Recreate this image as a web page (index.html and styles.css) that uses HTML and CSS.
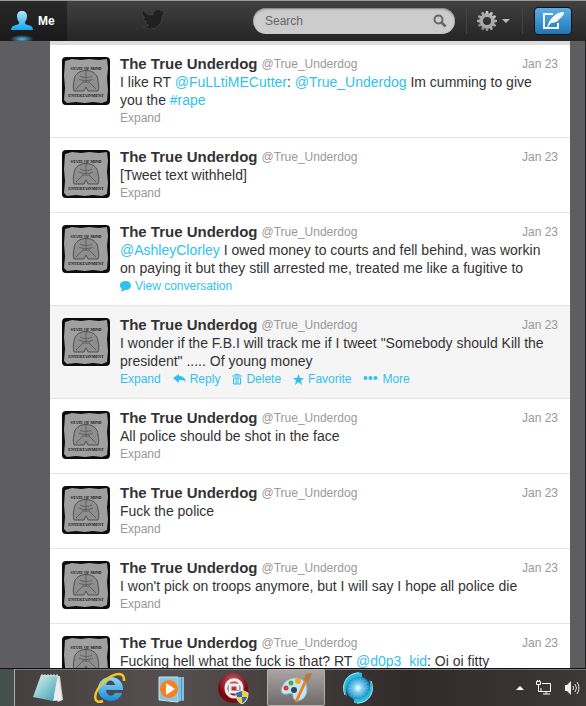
FILE: index.html
```html
<!DOCTYPE html>
<html lang="en">
<head>
<meta charset="utf-8">
<title>Timeline</title>
<link rel="stylesheet" href="styles.css">
</head>
<body>
<svg class="defs" aria-hidden="true">
  <defs>
    <linearGradient id="blue" x2="0" y2="1"><stop stop-color="#b4e4fb"/><stop offset="1" stop-color="#12a7ee"/></linearGradient>
    <linearGradient id="grey" x2="0" y2="1"><stop stop-color="#ccc"/><stop offset="1" stop-color="#888"/></linearGradient>
    <linearGradient id="page" x2="1" y2="1"><stop stop-color="#e2f5f6"/><stop offset="1" stop-color="#3b9db0"/></linearGradient>
    <linearGradient id="ie" x2="0" y2="1"><stop stop-color="#8fdcff"/><stop offset="1" stop-color="#188bd8"/></linearGradient>
    <radialGradient id="red" cy=".3"><stop stop-color="#c96870"/><stop offset="1" stop-color="#780911"/></radialGradient>
    <radialGradient id="glow"><stop stop-color="#fff"/><stop offset=".4" stop-color="#73cdf0"/><stop offset="1" stop-color="#0c83bd"/></radialGradient>
    <symbol id="avatar" viewBox="0 0 48 48">
      <rect width="48" height="48" rx="4" fill="#0c0c0c"/>
      <path d="M3 4l7-2 9 1 8-1 10 1 8-1 1 9-1 10 1 12-1 11-5 2-9-1-8 1-9-1-9 1-3-3 1-12-1-12z" fill="#a0a0a0"/>
      <path d="M12 34c-1-4-1-6 0-10 0-14 24-14 24 0 1 4 1 6 0 10H26l-2-4-2 4z" fill="#8e8e8e" stroke="#505050"/>
      <path d="M18 19c3 2 9 2 12 0M17 22c3 2 11 2 14 0M24 14v12M14 32l7-7M34 32l-7-7M20 25h8" stroke="#606060" fill="none"/>
      <text x="24" y="13" text-anchor="middle" class="avatar-text">STATE OF MIND</text>
      <text x="24" y="40" text-anchor="middle" class="avatar-text">ENTERTAINMENT</text>
    </symbol>
  </defs>
</svg>
<header class="topbar">
  <a class="me" href="#"><svg width="22" height="20" viewBox="0 0 22 20"><path d="M6 5c0-7 10-7 10 0 0 3-1 5-2 6v2l6 2c1 1 2 2 2 4H0c0-2 1-3 2-4l6-2v-2C7 10 6 8 6 5z" fill="url(#blue)"/></svg>Me</a>
  <a class="brand" href="#" aria-label="Home"><svg width="24" height="20" viewBox="0 0 24 20"><path d="M1 1c3 4 6 5 10 5 0-5 5-7 8-4l4-1-2 3 2 0-3 3c0 8-5 13-12 13-3 0-5-1-7-2 3 0 5-1 6-2-2 0-4-1-4-3h2c-3-1-4-3-4-5l2 1C1 7-1 4 1 1z" fill="#202020" stroke="#505050" stroke-width=".5"/></svg></a>
  <form class="search"><input type="search" aria-label="Search" placeholder="Search"><button type="button" aria-label="Submit search"><svg width="14" height="14" viewBox="0 0 14 14"><circle cx="5.5" cy="5.5" r="4" fill="none" stroke="#666" stroke-width="2"/><path d="M8.500 8.500l4 4" stroke="#666" stroke-width="2.500"/></svg></button></form>
  <button class="settings" type="button" aria-label="Settings"><svg width="20" height="20" viewBox="-10 -10 20 20"><g fill="url(#grey)"><path id="tooth" d="M-1-10h2l1 4h-4zM-1 10h2l1-4h-4zM-10-1v2l4 1v-4zM10-1v2l-4 1v-4z"/><use href="#tooth" transform="rotate(30)"/><use href="#tooth" transform="rotate(60)"/></g><circle r="5.500" fill="none" stroke="#aaa" stroke-width="3"/></svg><svg width="8" height="4" viewBox="0 0 8 4"><path d="M0 0h8L4 4z" fill="#bbb"/></svg></button>
  <button class="compose" type="button" aria-label="Compose"><svg width="24" height="20" viewBox="0 0 24 20"><path d="M12 3H3v14h14v-5" fill="none" stroke="#f5f8fb" stroke-width="2"/><path d="M6 16C9 7 15 1 23 1c0 3-1 4-3 5h1l-4 3h1c-2 2-5 3-8 3l-3 4z" fill="#f5f8fb"/></svg></button>
</header>
<main class="page">
  <div class="feed">
    <article class="tweet"><svg class="avatar"><use href="#avatar"/></svg><div class="body"><header><b>The True Underdog</b> <span>@True_Underdog</span><time>Jan 23</time></header><p>I like RT <a href="#">@FuLLtiMECutter</a>: <a href="#">@True_Underdog</a> Im cumming to give you the <a href="#">#rape</a></p><footer><a href="#">Expand</a></footer></div></article>
    <article class="tweet"><svg class="avatar"><use href="#avatar"/></svg><div class="body"><header><b>The True Underdog</b> <span>@True_Underdog</span><time>Jan 23</time></header><p>[Tweet text withheld]</p><footer><a href="#">Expand</a></footer></div></article>
    <article class="tweet"><svg class="avatar"><use href="#avatar"/></svg><div class="body"><header><b>The True Underdog</b> <span>@True_Underdog</span><time>Jan 23</time></header><p><a href="#">@AshleyClorley</a> I owed money to courts and fell behind, was workin on paying it but they still arrested me, treated me like a fugitive to</p><footer class="active"><a href="#"><svg width="11" height="11" viewBox="0 0 11 11"><path d="M5.500 0C9 0 11 2 11 4.500S9 9 5 9L1 11l1-3C-2 5 0 0 5.500 0z"/></svg>View conversation</a></footer></div></article>
    <article class="tweet hovered"><svg class="avatar"><use href="#avatar"/></svg><div class="body"><header><b>The True Underdog</b> <span>@True_Underdog</span><time>Jan 23</time></header><p>I wonder if the F.B.I will track me if I tweet "Somebody should Kill the president" ..... Of young money</p><footer class="active"><a href="#">Expand</a><a href="#"><svg width="13" height="11" viewBox="0 0 13 11"><path d="M0 4l6-4v2c4 0 6 2 7 6-2-2-4-2-7-2v3z"/></svg>Reply</a><a href="#"><svg width="10" height="11" viewBox="0 0 10 11"><path d="M3 1.500V.5h4v1M0 2h10M1.500 4v6h7V4zM4 4v6M6 4v6" fill="none" stroke="#2fc2ef"/></svg>Delete</a><a href="#"><svg width="11" height="11" viewBox="0 0 11 11"><path d="M5.500 0L7 4h4L8 6.500 9 11 5.500 8 2 11l1-4.500L0 4h4z"/></svg>Favorite</a><a href="#"><svg width="15" height="11" viewBox="0 0 15 11"><circle cx="2.500" cy="4" r="2"/><circle cx="7.500" cy="4" r="2"/><circle cx="12.500" cy="4" r="2"/></svg>More</a></footer></div></article>
    <article class="tweet"><svg class="avatar"><use href="#avatar"/></svg><div class="body"><header><b>The True Underdog</b> <span>@True_Underdog</span><time>Jan 23</time></header><p>All police should be shot in the face</p><footer><a href="#">Expand</a></footer></div></article>
    <article class="tweet"><svg class="avatar"><use href="#avatar"/></svg><div class="body"><header><b>The True Underdog</b> <span>@True_Underdog</span><time>Jan 23</time></header><p>Fuck the police</p><footer><a href="#">Expand</a></footer></div></article>
    <article class="tweet"><svg class="avatar"><use href="#avatar"/></svg><div class="body"><header><b>The True Underdog</b> <span>@True_Underdog</span><time>Jan 23</time></header><p>I won't pick on troops anymore, but I will say I hope all police die</p><footer><a href="#">Expand</a></footer></div></article>
    <article class="tweet"><svg class="avatar"><use href="#avatar"/></svg><div class="body"><header><b>The True Underdog</b> <span>@True_Underdog</span><time>Jan 23</time></header><p>Fucking hell what the fuck is that? RT <a href="#">@d0p3_kid</a>: Oi oi fitty</p></div></article>
  </div>
</main>
<nav class="taskbar" aria-label="Taskbar">
  <span class="edge"></span>
  <button type="button" aria-label="Notepad"><svg width="32" height="32" viewBox="0 0 32 32"><path d="M9 3l19 1 3 24-5 2z" fill="#d8d2b8"/><path d="M9 3h17l-5 26L1 25z" fill="url(#page)"/><path d="M10 2v3m3-3v3m3-3v3m3-3v3m3-3v3m3-3v3" stroke="#ddd"/><path d="M26 3l4 25-9 1z" fill="#e9eeee"/></svg></button>
  <button type="button" aria-label="Internet Explorer"><svg width="32" height="32" viewBox="0 0 32 32"><path d="M28 21C25 33 4 31 4 17 4 1 30 1 29 18H12c1 7 7 7 9 3zM12 13h9c-1-6-8-6-9 0z" fill="url(#ie)" fill-rule="evenodd"/><path d="M30 9C31-4 15 3 7 13-1 22-1 33 9 29" fill="none" stroke="#f5c524" stroke-width="2.500"/></svg></button>
  <button type="button" aria-label="Media Player"><svg width="32" height="32" viewBox="0 0 32 32"><path d="M9 5h19v23l-7 2z" fill="#4d9cc4"/><path d="M24 5v24m3-24v24" stroke="#b9e2f2"/><path d="M3 5h19v25L3 28z" fill="#8cc4e0" stroke="#c2e4f2"/><circle cx="13" cy="17" r="9" fill="#f5821f"/><path d="M10 11l9 6-9 6z" fill="#fff"/></svg></button>
  <button type="button" aria-label="Security"><svg width="32" height="32" viewBox="0 0 32 32"><circle cx="15" cy="16" r="15" fill="url(#red)"/><path d="M20 24c-6 3-12-1-12-8 0-11 16-11 16 0 0 3-1 4-3 4H12v-7h8v5" fill="none" stroke="#eee" stroke-width="3"/><path d="M24 18l6 3c0 6-2 9-6 11-4-2-6-5-6-11z" fill="#f8cf2c" stroke="#ddd"/><path d="M24 19v6h-5l-1-4zM24 25h5c-1 3-2 5-5 6z" fill="#286fc5"/></svg></button>
  <button type="button" class="current" aria-label="Paint"><svg width="32" height="32" viewBox="0 0 32 32"><path d="M3 13C8 3 27 3 27 17c0 13-14 15-14 7 0-5-5-1-9-2-4-1-3-6-1-9z" fill="#c5e4f5" stroke="#83b7d8"/><circle cx="6" cy="16" r="2.500" fill="#d84030"/><circle cx="11" cy="11" r="2.500" fill="#4ca83a"/><circle cx="18" cy="9" r="3" fill="#f2a91e"/><circle cx="14" cy="18" r="3" fill="#33475a"/><path d="M16 30L26 8" stroke="#e78325" stroke-width="3"/><path d="M24 8l2-6 6-1-4 9z" fill="#b9783f"/></svg></button>
  <button type="button" aria-label="Browser"><svg width="32" height="32" viewBox="0 0 32 32"><circle cx="16" cy="16" r="12" fill="url(#glow)"/><circle cx="16" cy="16" r="8" fill="none" stroke="#c5eefa" stroke-width="5" stroke-dasharray="1 2" opacity=".2"/><path d="M20 1C5-2-3 13 5 25 1 11 9 4 20 5z" fill="#25bfdb"/><path d="M12 31c15 3 23-12 15-24 4 14-4 21-15 20z" fill="#25bfdb"/><path d="M3 23C-2 10 7 1 17 1M29 9c5 13-4 22-14 22" fill="none" stroke="#b9e6ec"/></svg></button>
  <div class="tray">
    <svg width="8" height="4" viewBox="0 0 8 4"><path d="M0 4l4-4 4 4z" fill="#fff"/></svg>
    <svg width="16" height="16" viewBox="0 0 16 16"><path d="M6 3.500h8.500v8H5V8M7 14h7M10 12v2M.5 1.500v3h4v-3zM2.500 5v6.500H5M1.500 0v2m2-2v2" fill="none" stroke="#fff"/></svg>
    <svg width="16" height="16" viewBox="0 0 16 16"><path d="M1 5h2l4-4v14l-4-4H1z" fill="#eee"/><path d="M9 6q1 2 0 4m2-6q3 4 0 8m2-10q4 6 0 12" fill="none" stroke="#ddd"/></svg>
  </div>
</nav>
</body>
</html>
```
FILE: styles.css
```css
* { box-sizing: border-box; }
body {
  margin: 0;
  height: 100vh;
  display: flex;
  flex-direction: column;
  overflow: hidden;
  background: #5e5e61;
  color: #333;
  font: 14px/18px "Liberation Sans", Arial, sans-serif;
}
a { color: #2fc2ef; text-decoration: none; }
button { border: 0; padding: 0; background: none; }
svg { display: block; flex: none; }
.defs { position: absolute; width: 0; height: 0; }
.topbar {
  flex: none;
  display: flex;
  align-items: center;
  height: 41px;
  padding-right: 14px;
  border-top: 1px solid #999;
  background: linear-gradient(#404040, #252525);
}
.me {
  align-self: stretch;
  width: 67px;
  display: flex;
  align-items: center;
  gap: 5px;
  padding-left: 11px;
  color: #fff;
  font-size: 12px;
  font-weight: bold;
  background: radial-gradient(ellipse 12px 4px at 22px 38px, #58b5ec, transparent), linear-gradient(#292929, #191919);
}
.brand { flex: 1; padding: 0 0 4px 75px; }
.search {
  display: flex;
  align-items: center;
  width: 202px;
  height: 26px;
  padding: 0 8px 0 12px;
  border-radius: 13px;
  background: #ccc;
  box-shadow: inset 0 1px 2px #777;
}
.search input {
  flex: 1;
  min-width: 0;
  padding: 0;
  border: 0;
  outline: 0;
  background: none;
  font: 12px "Liberation Sans", Arial, sans-serif;
}
.search input::placeholder { color: #666; }
.settings {
  display: flex;
  align-items: center;
  gap: 5px;
  height: 26px;
  margin-left: 11px;
  padding: 0 12px 0 10px;
  border: solid #444;
  border-width: 0 1px;
}
.compose {
  display: grid;
  place-items: center;
  width: 38px;
  height: 28px;
  margin-left: 11px;
  border: 1px solid #111;
  border-radius: 4px;
  background: linear-gradient(#5baee8, #1f77b8);
}
.page {
  flex: 1;
  min-height: 0;
  overflow: hidden;
  padding: 0 15px 0 50px;
  border-right: 1px solid #222;
}
.feed { border-top: 4px solid #ddd; background: #fff; }
.tweet {
  display: flex;
  gap: 10px;
  padding: 10px 12px;
  border-bottom: 1px solid #e4e4e4;
}
.hovered { background: #f5f5f5; }
.avatar { width: 48px; height: 48px; margin-top: 2px; }
.avatar-text { font: bold 4px "Liberation Serif", serif; fill: #111; }
.body { flex: 1; min-width: 0; }
.body header { display: flex; gap: 4px; font-size: 12px; color: #999; }
.body b { font-size: 15px; color: #333; }
.body time { margin-left: auto; }
.body p { margin: 0; }
.body footer { display: flex; gap: 12px; font-size: 12px; }
.body footer a { display: flex; align-items: center; gap: 4px; color: #999; }
.body .active a { color: #2fc2ef; fill: #2fc2ef; }
.taskbar {
  flex: none;
  display: flex;
  align-items: stretch;
  height: 38px;
  border-top: 1px solid #111;
  background: linear-gradient(90deg, #443e3e, #55504f 30%, #302b2a 70%, #3c3837);
  box-shadow: inset 0 1px #777;
}
.taskbar .edge { width: 15px; margin-right: 4px; border-right: 1px solid #aaa; background: #44504c; }
.taskbar button { width: 58px; margin-right: 4px; display: grid; place-items: center; }
.taskbar .current {
  border: 1px solid #b5afad;
  border-radius: 2px;
  background: linear-gradient(#aaa4a3, #706a69);
}
.taskbar .tray { margin-left: auto; display: flex; align-items: center; gap: 12px; padding-right: 6px; }
```
